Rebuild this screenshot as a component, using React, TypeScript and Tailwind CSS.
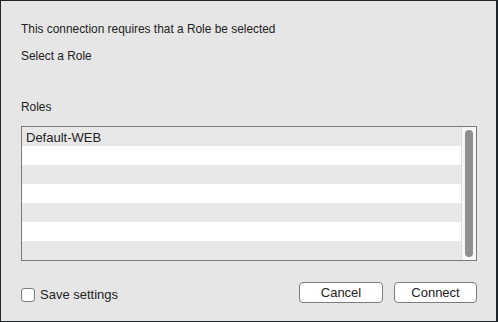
import React from "react";

const rows = ["Default-WEB", "", "", "", "", "", ""];

export default function App() {
  return (
    <div className="w-[498px] h-[322px] bg-[#1f262d] p-px font-['Liberation_Sans',Arial,sans-serif] text-[#222]">
      <div className="flex h-full w-[495px] flex-col bg-[#e6e6e6] pl-5 pr-5">
        <p className="mt-[21px] text-[11.9px] leading-[14px]">This connection requires that a Role be selected</p>
        <p className="mt-[13px] text-[11.9px] leading-[14px]">Select a Role</p>
        <p className="mt-[37px] text-[11.9px] leading-[14px]">Roles</p>

        <div className="mt-[12px] flex h-[135px] w-[456px] border border-[#7a7a7a] bg-white">
          <div className="flex flex-1 flex-col">
            {rows.map((r, i) => (
              <div
                key={i}
                className={`h-[19px] pl-[4px] pt-[2px] text-[13px] leading-[17px] ${i % 2 === 0 ? "bg-[#e8e8e8]" : "bg-white"}`}
              >
                {r}
              </div>
            ))}
          </div>
          <div className="flex w-[15px] justify-center border-l border-[#dcdcdc] bg-[#f7f7f7] py-[3px]">
            <div className="w-[8px] rounded-full bg-[#8f8f8f]" />
          </div>
        </div>

        <div className="mt-[21px] flex items-start">
          <label className="mt-[5px] flex items-center gap-[5px] text-[13px] leading-[16px]">
            <span className="h-[14px] w-[14px] rounded-[3px] border border-[#7d7d7d] bg-white" />
            Save settings
          </label>
          <div className="ml-auto mr-[-1px] flex gap-[11px]">
            <button className="h-[21px] w-[84px] rounded-[4px] border border-[#7d7d7d] bg-white text-[13px] leading-[19px]">
              Cancel
            </button>
            <button className="h-[21px] w-[83px] rounded-[4px] border border-[#7d7d7d] bg-white text-[13px] leading-[19px]">
              Connect
            </button>
          </div>
        </div>
      </div>
    </div>
  );
}
